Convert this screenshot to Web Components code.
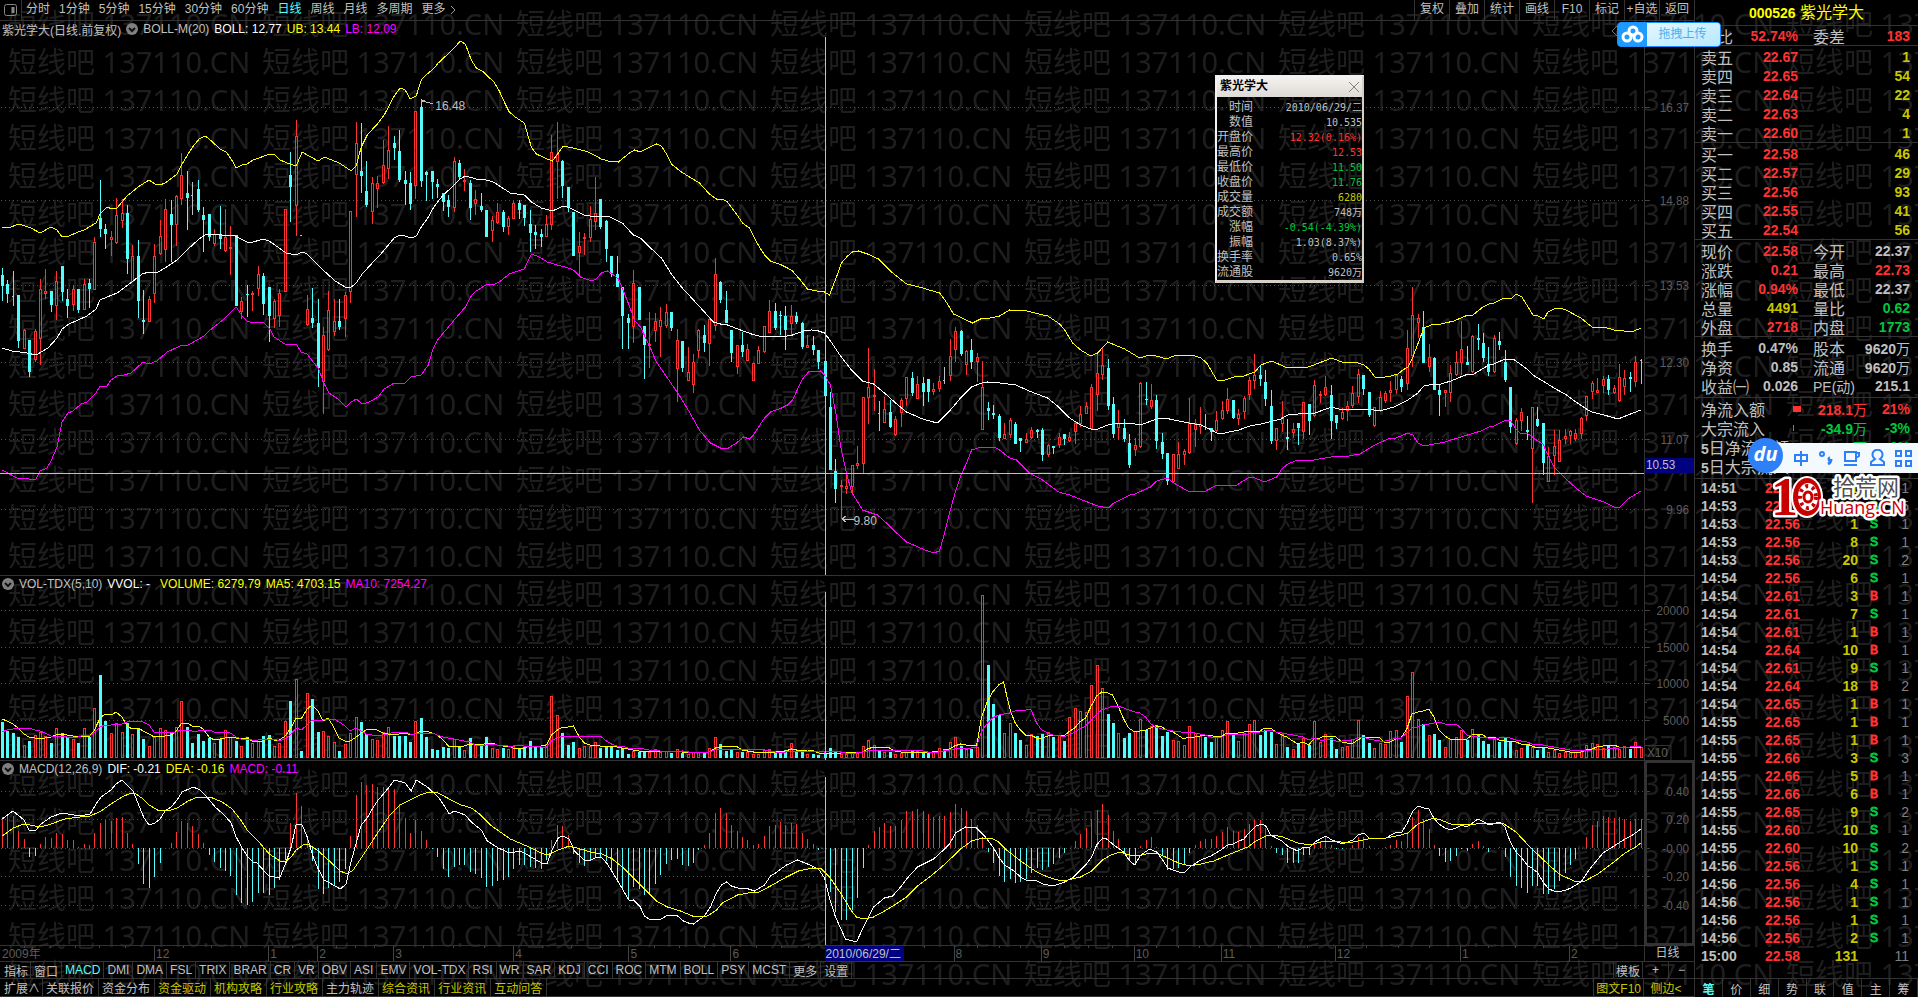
<!DOCTYPE html>
<html lang="zh-CN">
<head>
<meta charset="utf-8">
<title>紫光学大 000526</title>
<style>
  html, body { margin: 0; height: 100%; background: #000; overflow: hidden; }
  body { font-family: "Liberation Sans", "Noto Sans CJK SC", sans-serif; font-size: 12px; color: #c0c0c0; }
</style>
</head>
<body>
<stock-terminal></stock-terminal>

<script>
const COLORS = { r: '#ff3232', c: '#54fcfc', w: '#c0c0c0' }
const STEP = 5.4415
const barX = (i) => Math.floor(2.4 + STEP * i)
const words = (text) => text.trim().split(/\s+/)

// colour, then high / body top / body bottom / low
const CANDLES = words(`
c268,275,286,301 c280,284,294,303 w271,296,296,306 c295,295,341,348 r329,330,349,349 c340,340,372,377 r329,331,360,362 r279,289,339,365 r269,291,294,299 c291,291,305,312
r271,281,306,320 c266,266,292,301 c289,299,306,318 r285,289,305,311 c289,289,310,313 r279,284,310,310 c279,283,289,308 r237,242,290,290 c180,218,229,237 c224,229,234,249
r231,237,240,256 r198,215,243,244 r199,213,221,228 c205,213,259,274 r245,256,282,282 c240,256,301,318 c290,320,322,334 r296,299,322,322 r244,256,294,303 r220,236,254,255
r199,209,250,262 c200,214,225,262 r195,196,225,246 r153,175,199,205 c171,193,198,230 w182,195,195,215 c180,189,210,212 c207,215,220,252 c214,214,237,241 r229,234,244,246
c206,235,239,249 r209,237,251,252 r226,247,249,275 c235,235,306,306 r297,301,312,319 c285,294,295,317 r291,293,295,311 r266,274,289,296 c273,276,304,315 c287,287,316,342
r299,301,319,328 r289,293,316,327 r209,209,292,292 c152,175,187,222 r120,136,206,236 w235,235,235,236 r295,309,325,326 c288,318,323,328 c299,323,368,387 r327,335,382,414
r291,310,350,351 r299,321,332,336 c299,321,327,330 r292,295,319,337 r211,211,292,303 r122,143,175,217 c123,171,176,193 c161,191,205,207 r177,183,212,224 r176,183,189,208
r140,165,183,184 r126,150,169,179 c136,143,148,160 c130,151,180,182 c171,180,184,205 c172,183,204,210 r111,111,186,199 c99,107,181,187 c171,172,175,201 c171,171,182,199
c179,184,187,198 c193,193,202,211 c195,200,207,217 r157,161,208,212 c160,163,177,180 r169,180,182,191 c180,183,208,220 r190,199,204,215 c193,206,210,212 c210,210,237,237
r216,220,231,242 r203,212,223,224 c210,212,227,232 r216,218,227,235 r201,203,219,219 c200,203,210,219 c205,205,218,226 c210,224,233,252 c225,232,235,249 c229,234,237,247
r215,224,237,237 r135,152,225,230 r122,154,162,199 c160,161,186,198 c187,187,207,212 c212,212,256,256 r232,246,253,276 r233,237,239,255 r206,219,238,242 r177,213,222,230
c199,199,227,229 c220,221,249,262 c256,256,274,277 c256,274,287,287 c287,287,316,349 c314,318,323,349 r270,283,327,343 c287,287,320,320 c326,326,345,379 r312,344,346,368
r313,321,331,342 r307,320,327,357 r304,312,326,328 c312,312,328,331 r329,340,369,402 c341,341,368,372 r347,372,381,381 r354,362,385,393 r329,330,351,358 c325,335,343,352
r317,319,344,366 r258,274,326,331 c281,282,300,303 c291,310,323,323 c330,330,353,362 r345,345,367,374 c332,345,352,357 r344,349,361,361 r363,363,381,381 r346,350,364,364
r326,326,352,353 r300,311,333,333 c303,311,328,330 c311,315,316,335 c306,316,330,350 r305,316,324,336 c312,316,322,324 c322,323,347,349 r335,345,348,348 c336,345,350,355
c350,350,362,369 c361,361,396,396 c392,407,470,470 c459,471,489,503 r480,485,487,519 r475,486,489,494 r465,465,487,494 r446,463,466,469 r397,397,464,473 r348,387,398,424
r369,395,397,411 w401,413,413,431 r397,409,423,423 c400,412,427,428 r416,419,435,436 r398,400,413,427 r377,377,399,406 c372,378,393,396 r376,384,399,399 c377,383,392,406
c379,379,392,402 r383,389,392,395 r376,381,389,392 w367,380,380,384 r339,356,376,381 r327,331,350,362 c330,331,354,356 r350,351,365,375 c339,350,362,369 r353,357,362,382
r361,387,430,430 c402,408,411,420 c405,413,415,419 c414,416,438,441 r423,434,439,439 r418,420,435,438 c422,424,444,444 c438,438,441,452 r433,439,443,443 r427,430,438,439
c429,430,432,438 c428,430,455,461 r444,445,455,457 c446,446,448,454 r433,437,445,448 c434,434,439,445 r432,437,441,442 r421,423,432,444 r406,414,424,427 r402,406,414,414
r384,387,429,430 r353,373,395,411 r348,365,375,380 c359,368,406,410 c397,404,434,438 r410,423,428,440 c419,428,439,442 c434,443,465,468 r438,445,450,456 r382,383,447,448
c382,399,400,405 r384,400,407,409 c395,400,441,449 c433,442,454,459 c453,453,481,485 r454,454,482,482 r442,454,469,469 r449,451,455,465 r398,423,453,454 r419,423,430,447
r407,424,427,434 w414,426,426,430 c428,428,432,441 r411,420,431,432 r401,410,419,420 r388,399,411,414 c400,400,418,419 r409,414,419,425 r396,398,412,419 r377,380,395,400
r354,375,381,389 c365,375,379,386 c370,382,399,406 c390,406,441,444 r428,428,441,450 r401,417,424,432 c419,437,439,450 r423,429,433,438 c423,423,428,445 r402,402,432,439
c404,404,421,435 r380,385,416,417 r391,394,395,403 r376,387,395,396 c385,395,421,439 c415,415,423,429 r408,412,419,420 r401,406,411,421 r386,393,406,408 r369,374,397,403
c375,375,389,395 c392,392,415,417 r407,407,426,427 r391,397,411,412 r391,393,401,403 r381,390,393,402 r375,375,390,394 c376,379,387,392 r330,348,384,390 r287,315,356,367
r314,318,323,338 c311,327,363,363 r344,357,367,372 c357,358,390,390 c385,390,395,416 r390,390,393,407 r365,373,393,402 r351,362,375,376 r321,349,363,375 c346,362,365,365
r335,336,372,373 c324,338,340,350 c333,343,358,362 c347,364,372,376 r335,338,372,373 c332,341,345,350 c350,362,380,382 c387,387,427,433 r418,420,444,445 r408,412,421,431
c416,430,432,440 r407,407,449,503 c407,419,426,427 c423,423,463,475 r447,456,482,482 r430,446,456,475 r430,440,462,462 r429,436,439,444 r430,431,436,444 r429,433,439,441
r417,418,434,439 r396,396,416,421 r381,383,392,399 r378,390,393,393 r376,379,386,393 c375,379,390,395 r385,388,393,394 r364,377,401,402 r370,378,387,395 c372,377,379,392
r356,362,382,387 w359,360,360,384`).map((item) => ({ color: item[0], p: item.slice(1).split(',').map(Number) }))

const VOLUMES = words(`
36 27 25 21 13 17 23 26 22 15 30 25 21 19 15 30 21 50 83 37 25 35 26 35 24 30 19 12 21 30 28 26 31 57 31 15 24 17 20 15
19 28 21 17 12 21 15 17 22 23 12 15 37 57 79 7 65 59 26 27 22 16 7 14 25 41 36 24 19 18 26 31 22 22 22 16 37 40 21 9
8 11 10 19 12 8 20 13 12 21 10 9 10 9 12 10 11 17 12 11 14 62 43 25 13 16 10 12 12 16 10 11 12 8 10 4 7 6 6 6
9 6 7 5 9 5 4 6 6 6 10 21 14 7 8 6 6 6 4 4 8 9 6 6 8 15 6 6 4 4 3 4 10 6 4 4 5 5 12 18
13 7 6 6 4 5 6 7 7 6 6 6 10 9 16 21 12 9 9 11 163 93 54 43 25 35 25 18 13 24 22 24 26 21 23 17 41 50 47 46
73 93 70 44 35 25 20 25 27 39 28 32 33 22 26 18 17 13 32 25 22 21 16 22 28 37 23 17 25 34 38 23 28 26 14 24 11 9 14 20
13 37 16 24 20 9 11 12 19 38 23 15 10 15 14 27 28 16 62 86 39 34 23 24 18 11 19 21 28 18 29 24 17 14 19 16 20 17 8 10
13 11 8 11 6 8 5 6 6 6 7 13 15 14 10 13 11 9 12 9 16 11`).map(Number)

// histogram heights, below zero when negative
const MACD = words(`
31 34 32 17 9 -9 -8 4 11 10 15 14 8 8 1 4 3 15 25 28 27 30 31 15 4 -16 -36 -40 -29 -15 0 5 16 27 25 22 14 5 -7 -14
-20 -23 -28 -47 -55 -57 -54 -45 -45 -47 -40 -32 -12 25 55 42 11 -13 -41 -46 -40 -37 -34 -21 12 53 66 63 64 61 61 61 59 44 30 15 28 17 8 -1
-9 -21 -29 -19 -17 -17 -24 -26 -30 -39 -38 -33 -32 -29 -21 -17 -17 -19 -20 -21 -12 8 23 22 13 -6 -15 -18 -13 -10 -10 -13 -23 -32 -42 -52 -39 -41 -47 -46
-36 -27 -16 -12 -11 -17 -18 -15 -2 3 15 35 40 35 23 17 11 8 3 4 12 22 23 26 23 25 24 15 9 4 -2 -15 -44 -64 -72 -72 -62 -50 -20 3
17 21 25 22 22 28 37 37 39 37 34 31 32 32 36 44 40 37 29 23 11 -4 -15 -28 -34 -31 -35 -34 -31 -25 -20 -22 -19 -16 -10 -5 0 7 14 20
29 38 44 33 17 9 -4 -13 -16 2 8 11 1 -8 -22 -21 -20 -16 -5 3 7 9 9 12 16 21 17 16 19 24 28 28 20 2 -5 -7 -15 -15 -15 -7
-7 4 7 11 3 -1 -1 0 3 11 11 2 0 0 1 3 8 7 16 31 38 29 19 3 -8 -14 -13 -8 -1 -3 4 7 2 -4 0 1 -9 -29 -38 -40
-45 -38 -38 -46 -46 -41 -33 -25 -17 -11 0 11 23 27 32 31 30 31 29 27 29 29`).map(Number)

const UPPER = `2,227 8,228 19,224 31,228 40,233 51,227 57,230 62,237 69,236 78,232 84,230 96,223 100,214 107,207 112,209 117,208 127,196 138,187 149,180 155,184 160,185 165,183 177,174 182,164 188,154 194,145 199,139 205,136 209,139 220,149 226,152 231,159 236,168 242,165 247,164 253,160 267,155 274,154 280,160 287,163 296,166 302,152 307,155 318,161 324,157 339,163 351,171 356,166 361,147 367,135 378,123 384,115 394,96 400,88 405,90 410,99 416,96 421,80 427,74 433,69 438,63 454,48 460,41 465,44 471,60 476,68 482,71 488,77 493,81 499,91 504,102 509,112 515,117 524,123 531,147 536,154 547,159 552,161 558,153 563,146 573,148 588,152 601,159 608,161 618,162 629,153 634,150 640,152 656,144 661,146 666,154 671,164 681,172 699,183 709,194 716,199 722,199 727,202 736,214 742,223 749,228 756,242 764,255 770,261 781,265 787,268 792,271 799,279 807,289 816,291 824,292 829,295 836,277 841,263 847,256 852,252 858,251 867,254 878,259 891,272 906,284 922,288 939,293 945,301 953,314 972,323 982,318 989,318 999,316 1009,310 1026,311 1047,316 1059,324 1064,330 1072,343 1080,350 1090,356 1097,353 1107,342 1124,349 1139,358 1145,356 1152,355 1166,359 1173,356 1183,355 1194,356 1200,358 1206,363 1216,380 1222,381 1230,378 1237,376 1243,376 1254,372 1260,365 1271,361 1280,365 1284,367 1307,367 1313,365 1331,358 1341,362 1357,363 1363,365 1368,369 1374,377 1379,378 1390,376 1397,374 1402,370 1407,367 1412,357 1423,328 1433,324 1440,324 1453,321 1467,315 1472,315 1482,307 1488,304 1493,303 1499,300 1504,298 1510,299 1515,294 1521,297 1532,315 1537,316 1543,319 1547,312 1553,309 1559,308 1565,310 1580,318 1591,327 1603,327 1613,330 1623,331 1633,331 1640,328`
const MIDDLE = `2,348 12,351 27,353 36,355 48,348 57,338 62,329 69,324 87,316 96,309 100,300 107,297 117,293 133,281 142,274 149,272 156,273 165,268 177,260 188,249 199,239 205,235 210,234 222,235 235,236 247,242 253,242 263,239 269,241 286,253 296,255 302,252 307,254 318,265 324,271 335,281 345,287 351,287 356,283 362,274 372,263 378,257 389,244 394,238 400,235 405,236 411,238 416,236 421,227 427,219 433,208 438,201 444,194 454,185 460,179 465,176 476,179 482,179 493,182 510,193 524,195 531,202 541,208 552,211 563,206 570,208 584,215 590,216 608,216 614,219 622,223 633,235 640,238 648,246 661,258 671,274 681,287 693,300 704,312 713,322 720,324 727,325 740,330 751,334 758,336 781,337 792,335 803,331 811,330 818,331 824,333 830,341 840,356 851,370 862,381 873,384 884,393 895,403 906,412 922,419 933,422 938,422 949,411 960,398 966,392 971,387 981,383 987,382 999,383 1015,385 1031,392 1047,398 1058,407 1069,418 1080,425 1090,429 1097,429 1107,425 1116,423 1129,423 1139,425 1145,423 1156,419 1164,418 1183,422 1200,425 1211,430 1216,433 1224,433 1238,430 1249,426 1260,424 1280,419 1287,415 1297,414 1314,413 1331,407 1338,409 1368,409 1379,411 1393,407 1407,400 1417,393 1423,386 1433,384 1440,384 1450,381 1467,374 1473,374 1488,365 1493,364 1504,359 1512,359 1515,361 1526,369 1532,375 1542,381 1553,388 1564,394 1575,402 1587,410 1591,412 1603,415 1617,419 1627,415 1640,410`
const LOWER = `2,470 19,479 24,478 29,479 36,479 40,471 47,468 51,461 57,447 62,422 68,413 73,411 81,404 87,402 96,393 100,386 107,386 111,380 117,376 124,375 131,373 143,362 149,364 157,361 167,352 180,346 188,345 204,336 210,330 224,319 236,307 242,316 247,321 253,323 263,322 269,328 274,337 286,345 296,344 301,352 307,354 313,362 318,368 324,384 329,393 339,400 346,407 351,402 356,399 362,404 369,402 378,397 384,389 394,383 405,383 411,377 421,375 428,365 433,348 438,339 444,332 454,320 465,307 471,296 476,291 487,284 493,285 499,282 509,274 524,269 531,254 539,257 547,262 557,265 565,267 573,270 580,277 591,281 596,279 601,273 607,271 612,274 618,279 623,291 629,306 634,320 640,327 650,348 656,362 678,394 689,412 699,430 710,443 720,448 728,448 736,443 743,437 749,439 753,435 764,418 770,412 781,408 787,405 792,400 802,379 808,372 820,371 824,375 830,385 836,417 840,446 846,473 851,492 862,510 877,515 887,524 895,532 906,542 922,549 933,553 939,551 944,533 949,513 955,491 960,476 966,463 971,450 981,447 993,447 999,450 1009,458 1016,460 1030,474 1042,480 1058,492 1069,495 1097,506 1108,508 1113,503 1129,495 1134,494 1150,487 1156,481 1167,478 1173,483 1187,491 1205,491 1216,485 1236,485 1249,477 1254,478 1264,482 1276,477 1281,469 1287,464 1297,460 1313,460 1330,457 1348,456 1359,454 1374,445 1387,439 1395,438 1407,433 1412,435 1417,443 1423,446 1444,442 1460,437 1480,431 1488,427 1493,426 1505,420 1510,421 1515,429 1520,434 1526,433 1537,441 1542,444 1548,457 1553,467 1564,478 1575,488 1585,496 1603,502 1613,507 1619,507 1627,499 1640,491`
const DIF = `2,819 13,811 24,820 29,830 36,830 41,824 51,817 62,813 80,816 90,814 96,804 101,797 111,790 116,784 122,780 133,791 139,806 144,818 149,825 155,823 160,819 165,811 171,807 177,800 182,792 193,787 200,790 205,795 215,807 225,816 231,823 236,837 242,848 247,856 253,862 257,863 263,870 269,876 275,877 280,877 286,862 291,847 296,824 302,825 307,837 313,857 318,869 324,880 335,886 340,889 346,884 350,865 356,843 361,825 367,818 372,809 378,800 389,787 394,780 405,783 411,791 416,780 427,787 438,797 444,806 449,814 454,811 465,815 471,822 481,830 487,841 498,848 509,853 520,851 531,857 541,863 547,863 552,849 558,838 562,836 569,839 574,851 584,860 591,860 596,857 602,858 607,864 612,872 618,882 629,901 633,900 640,907 644,916 650,920 661,919 667,915 676,915 683,921 688,923 693,924 704,916 710,907 716,893 721,885 726,882 731,886 737,888 748,889 754,891 764,885 770,876 775,873 786,865 797,860 807,864 818,869 824,878 829,898 835,917 845,939 856,942 862,929 868,917 873,907 884,898 892,896 900,887 906,879 917,867 933,859 944,849 949,844 955,833 965,827 976,828 984,836 987,840 993,848 998,857 1004,865 1012,870 1020,877 1025,880 1036,881 1042,884 1053,886 1064,882 1073,877 1085,865 1091,857 1096,845 1102,838 1106,839 1113,845 1123,852 1129,861 1134,865 1140,855 1149,849 1156,852 1162,860 1167,868 1178,872 1184,872 1189,867 1200,860 1210,856 1220,850 1227,845 1232,844 1243,839 1250,831 1255,826 1261,824 1265,826 1270,835 1281,841 1288,847 1297,851 1303,847 1308,848 1314,842 1325,836 1331,840 1342,844 1347,842 1352,840 1357,835 1363,833 1368,838 1385,838 1396,832 1401,832 1406,824 1412,811 1417,806 1423,808 1428,809 1433,818 1438,824 1444,828 1450,830 1455,828 1461,825 1466,827 1477,819 1483,822 1488,825 1499,822 1504,827 1509,841 1515,852 1521,858 1527,866 1531,868 1537,873 1542,882 1548,889 1553,891 1558,892 1565,890 1570,888 1580,882 1586,873 1592,865 1602,853 1613,846 1624,839 1630,836 1640,829`
const DEA = `2,836 8,832 13,828 24,824 41,827 51,824 65,819 80,817 90,816 101,811 111,804 122,797 131,793 136,794 143,799 149,805 159,811 171,810 177,808 188,801 195,798 210,797 222,802 232,809 242,822 247,830 258,841 269,854 280,861 286,861 291,857 296,850 303,845 308,844 318,851 327,859 340,871 347,874 353,870 361,858 369,846 378,832 389,816 400,805 412,799 420,795 429,792 438,793 449,799 461,805 471,808 478,813 490,825 510,839 531,848 541,853 547,855 558,850 569,846 580,849 590,852 602,854 612,859 623,868 640,885 650,895 656,901 667,907 680,911 692,916 700,917 707,916 716,910 722,903 737,895 748,893 759,892 770,886 786,877 798,871 812,868 821,869 829,877 840,893 851,911 856,917 863,919 873,917 884,911 894,905 906,897 917,886 929,877 941,867 955,854 960,849 971,841 982,838 992,839 998,842 1006,850 1020,861 1036,872 1047,877 1057,880 1067,880 1080,877 1091,871 1102,860 1110,855 1119,852 1129,855 1137,856 1149,853 1156,853 1167,858 1178,863 1189,866 1200,864 1213,861 1232,853 1247,847 1255,841 1265,836 1272,835 1282,837 1297,843 1310,845 1320,842 1333,841 1347,843 1367,839 1385,838 1400,835 1407,833 1417,824 1427,820 1433,818 1440,820 1450,824 1467,825 1483,823 1502,823 1506,826 1515,832 1531,849 1548,865 1558,874 1573,881 1582,882 1597,874 1613,862 1624,853 1633,848 1640,843`

const polyline = (points, color) => `<polyline points="${points}" fill="none" stroke="${color}"/>`
const gridLines = (levels) => levels.map((y) => `<path d="M1 ${y}.5H1643" stroke="#505050" stroke-dasharray="1 3"/>`).join('')
const crosshair = (from, to) => `<path d="M824.5 ${from}V${to}" stroke="#c0c0c0"/>`

function drawCandles() {
  const d = { r: '', c: '', w: '' }
  let bodies = ''
  CANDLES.forEach(({ color, p: [high, top, bottom, low] }, i) => {
    const x = barX(i)
    if (color === 'r') {
      d.r += `M${x} ${high}h1V${top}h-1zM${x} ${bottom}h1V${low}h-1z`
      bodies += `M${x - 1} ${top}h3V${Math.max(bottom, top + 2)}h-3zM${x} ${top + 1}v${Math.max(bottom - top - 2, 0)}h1V${top + 1}z`
    } else {
      d[color] += `M${x} ${high}h1V${low}h-1z`
      d[color] += color === 'c' ? `M${x - 1} ${top}h3V${Math.max(bottom, top + 1)}h-3z` : `M${x - 1} ${top}h2v1h-2z`
    }
  })
  return `<path d="${d.r}" fill="${COLORS.r}"/><path d="${bodies}" fill="${COLORS.r}" fill-rule="evenodd"/>
    <path d="${d.c}" fill="${COLORS.c}"/><path d="${d.w}" fill="${COLORS.w}"/>`
}

function average(size) {
  const before = [10, 12, 14, 14, 20, 38, 38, 40, 42]
  const all = [...before, ...VOLUMES]
  return VOLUMES.map((_, i) => {
    const part = all.slice(i + before.length - size + 1, i + before.length + 1)
    const mean = part.reduce((sum, v) => sum + v, 0) / size
    return `${barX(i)},${Math.round(758 - mean)}`
  }).join(' ')
}

function drawVolume() {
  let red = ''
  let cyan = ''
  VOLUMES.forEach((v, i) => {
    const x = barX(i)
    const top = 758 - v
    if (CANDLES[i].color === 'r' || i === 301) red += `M${x - 1} ${top}h3V758h-3zM${x} ${top + 1}V757h1V${top + 1}z`
    else cyan += `M${x - 1} ${top}h3V758h-3z`
  })
  return `<path d="${red}" fill="${COLORS.r}" fill-rule="evenodd"/><path d="${cyan}" fill="${COLORS.c}"/>`
    + polyline(average(5), '#ff0') + polyline(average(10), '#f0f')
}

function drawMacd() {
  const d = { r: '', c: '' }
  MACD.forEach((v, i) => { if (v) d[v > 0 ? 'r' : 'c'] += `M${barX(i)}.5 848V${848 - v}` })
  return `<path d="${d.r}" stroke="${COLORS.r}"/><path d="${d.c}" stroke="${COLORS.c}"/>` + polyline(DIF, '#fff') + polyline(DEA, '#ff0')
}

const PANELS = {
  price: {
    top: 21, height: 554,
    draw: () => gridLines([107, 200, 285, 362, 439, 509]) + drawCandles()
      + polyline(UPPER, '#ff0') + polyline(MIDDLE, '#fff') + polyline(LOWER, '#f0f')
      + crosshair(37, 575) + `<path d="M0 473.5H1643" stroke="#c0c0c0"/>
        <path d="M433 104L422 101M421 105V100H425M853 519.5H842M845 516L842 519L845 522" fill="none" stroke="#c0c0c0"/>
        <text x="435" y="110" fill="#c0c0c0">16.48</text><text x="853" y="525" fill="#c0c0c0">9.80</text>`,
    ticks: [[107, '16.37'], [200, '14.88'], [285, '13.53'], [362, '12.30'], [439, '11.07'], [509, '9.96']],
    extra: '<rect x="0" y="458" width="51" height="15" fill="#000080"/><text x="1" y="469" style="text-anchor:start;fill:#c0c0c0">10.53</text>'
  },
  volume: {
    top: 576, height: 184,
    draw: () => gridLines([610, 647, 683, 720]) + drawVolume() + crosshair(591, 760),
    ticks: [[610, '20000'], [647, '15000'], [683, '10000'], [720, '5000']],
    minor: [629, 665, 702, 739],
    extra: '<path d="M0 745.5H26.5V760" fill="none" stroke="#333"/><text x="2" y="757" style="text-anchor:start">X10</text>'
  },
  macd: {
    top: 761, height: 184,
    draw: () => gridLines([791, 819, 848, 876, 905]) + drawMacd() + crosshair(776, 945),
    ticks: [[791, '0.40'], [819, '0.20'], [848, '-0.00'], [876, '-0.20'], [905, '-0.40']],
    minor: [805, 833, 862, 891],
    extra: '<rect x="1" y="762" width="48" height="182" fill="none" stroke="#333" stroke-width="2"/>'
  }
}

class ChartPanel extends HTMLElement {
  constructor() {
    super()
    this.attachShadow({ mode: 'open' })
  }
  connectedCallback() {
    const { top, height, draw, ticks, minor = [], extra } = PANELS[this.getAttribute('kind')]
    this.shadowRoot.innerHTML = /*html*/ `
      <style>
        :host { display: grid; grid-template-columns: minmax(0, 1fr) 50px; min-height: 0; box-sizing: border-box; }
        .plot { display: flex; flex-direction: column; min-height: 0; }
        header { display: flex; align-items: center; gap: 5px; height: 16px; padding: 0 2px; white-space: nowrap; }
        .plot svg.chart { flex: 1; min-height: 0; width: 100%; }
        .scale { position: relative; border-left: 1px solid #333; min-height: 0; }
        .scale svg { display: block; width: 100%; height: 100%; }
        svg { shape-rendering: crispEdges; font-size: 12px; }
        .scale text { text-anchor: end; fill: #5c5c5c; }
      </style>
      <section class="plot">
        <header><slot></slot></header>
        <svg class="chart" viewBox="0 ${top + 16} 1643 ${height - 16}" preserveAspectRatio="none">${draw()}</svg>
      </section>
      <div class="scale">
        <svg viewBox="0 ${top} 50 ${height}" preserveAspectRatio="none">
          ${ticks.map(([y, label]) => `<path d="M0 ${y}.5H5" stroke="#444"/><text x="45" y="${y + 5}">${label}</text>`).join('')}
          ${minor.map((y) => `<path d="M0 ${y}.5H2" stroke="#444"/>`).join('')}
          ${extra}
        </svg>
      </div>`
  }
}
customElements.define('chart-panel', ChartPanel)

class FoldButton extends HTMLElement {
  connectedCallback() {
    this.attachShadow({ mode: 'open' }).innerHTML = /*html*/ `
      <style>
        :host { display: flex; }
        button { display: flex; padding: 0; border: 0; background: none; }
      </style>
      <button aria-label="折叠"><svg width="12" height="12"><circle cx="6" cy="6" r="6" fill="#808080"/><path d="M3 5l3 3 3-3" fill="none" stroke="#111" stroke-width="2"/></svg></button>`
  }
}
customElements.define('fold-button', FoldButton)

class TopBar extends HTMLElement {
  connectedCallback() {
    const periods = ['分时', '1分钟', '5分钟', '15分钟', '30分钟', '60分钟', '日线', '周线', '月线', '多周期', '更多']
    const tools = ['复权', '叠加', '统计', '画线', 'F10', '标记', '+自选', '返回']
    this.attachShadow({ mode: 'open' }).innerHTML = /*html*/ `
      <style>
        :host { display: flex; justify-content: space-between; height: 20px; border-bottom: 1px solid #333; }
        button { font: inherit; color: inherit; background: none; border: 0; padding: 0; line-height: 18px; white-space: nowrap; }
        nav, .tools { display: flex; align-items: flex-start; }
        .dock { display: flex; align-items: center; justify-content: center; width: 22px; height: 20px; border-right: 1px solid #333; margin-right: 4px; }
        nav { gap: 9px; }
        nav svg { margin: 5px 0 0 -5px; }
        .periods { display: flex; }
        .on { color: #54fcfc; }
        .tools button { width: 35px; height: 20px; padding-bottom: 2px; border-left: 1px solid #333; }
      </style>
      <div class="periods">
        <button class="dock" aria-label="侧栏"><svg width="13" height="13" fill="none" stroke="#888"><rect x=".5" y=".5" width="12" height="11" rx="2"/><path d="M9 3v6" stroke-width="3"/></svg></button>
        <nav>${periods.map((name) => `<button class="${name === '日线' ? 'on' : ''}">${name}</button>`).join('')}
          <svg width="6" height="10" fill="none" stroke="#a0a0a0"><path d="M1 1l4 4-4 4"/></svg></nav>
      </div>
      <div class="tools">${tools.map((name) => `<button>${name}</button>`).join('')}</div>`
  }
}
customElements.define('top-bar', TopBar)

class DateAxis extends HTMLElement {
  connectedCallback() {
    const months = [[154, 12], [268, 1], [317, 2], [393, 3], [513, 4], [628, 5], [730, 6], [953, 8], [1040, 9], [1133, 10], [1220, 11], [1334, 12], [1459, 1], [1568, 2]]
    const minor = [24, 50, 75, 99, 125, 183, 211, 240, 292, 336, 355, 374, 423, 453, 484, 542, 571, 600, 654, 679, 704, 756, 781, 808, 923, 976, 998, 1019, 1063, 1087, 1111, 1155, 1177, 1198, 1249, 1277, 1306, 1365, 1397, 1428, 1487, 1514, 1542]
    this.attachShadow({ mode: 'open' }).innerHTML = /*html*/ `
      <style>
        :host { display: grid; grid-template-columns: minmax(0, 1fr) 50px; height: 15px; border-top: 1px solid #333; }
        svg { width: 100%; height: 15px; font-size: 12px; fill: #5c5c5c; shape-rendering: crispEdges; }
        span { border-left: 1px solid #333; text-align: center; line-height: 15px; padding-right: 4px; }
      </style>
      <svg viewBox="0 0 1643 15" preserveAspectRatio="none">
        <text x="2" y="12">2009年</text>
        ${months.map(([x, m]) => `<path d="M${x}.5 0V15" stroke="#444"/><text x="${x + 2}" y="12">${m}</text>`).join('')}
        ${minor.map((x) => `<path d="M${x}.5 0v2" stroke="#444"/>`).join('')}
        <rect x="824" width="79" height="15" fill="#000080"/><text x="825" y="12" fill="#c0c0c0">2010/06/29/二</text>
      </svg>
      <span>日线</span>`
  }
}
customElements.define('date-axis', DateAxis)

class TabStrip extends HTMLElement {
  connectedCallback() {
    const items = this.getAttribute('items').split(' ')
    const hot = (this.getAttribute('hot') || '').split(' ')
    const paint = (name) => name === this.getAttribute('active') ? 'on' : hot.includes(name) ? 'hot' : ''
    this.attachShadow({ mode: 'open' }).innerHTML = /*html*/ `
      <style>
        :host { display: flex; align-items: stretch; border-top: 1px solid #333; height: var(--strip-height, 16px); }
        nav { display: flex; flex: 1; }
        button { font: inherit; color: inherit; background: none; border: 0; border-right: 1px solid #333; padding: 0 var(--tab-end, 3px) 0 3px; white-space: nowrap; }
        nav button:first-child { padding: 0 2px 0 4px; }
        .on { color: #54fcfc; }
        .hot { color: #c8c800; }
      </style>
      <nav>${items.map((name) => `<button class="${paint(name)}">${name}</button>`).join('')}</nav>
      <slot></slot>`
  }
}
customElements.define('tab-strip', TabStrip)

class QuotePanel extends HTMLElement {
  connectedCallback() {
    const groups = [
      [['委比', '52.74%', 'r', '委差', '183', 'r']],
      ['五 22.67 1', '四 22.65 54', '三 22.64 22', '二 22.63 4', '一 22.60 1'].map((s) => this.order('卖', s)),
      ['一 22.58 46', '二 22.57 29', '三 22.56 93', '四 22.55 41', '五 22.54 56'].map((s) => this.order('买', s)),
      [['现价', '22.58', 'r', '今开', '22.37', 'w'], ['涨跌', '0.21', 'r', '最高', '22.73', 'r'], ['涨幅', '0.94%', 'r', '最低', '22.37', 'w'],
        ['总量', '4491', 'y', '量比', '0.62', 'g'], ['外盘', '2718', 'r', '内盘', '1773', 'g']],
      [['换手', '0.47%', 'w', '股本', '9620<i>万</i>', 'w'], ['净资', '0.85', 'w', '流通', '9620<i>万</i>', 'w'], ['收益㈠', '0.026', 'w', '<small>PE(动)</small>', '215.1', 'w']]
    ]
    const flows = [['净流入额', 'block', '218.1', '21%', 'r'], ['大宗流入', 'line', '-34.9', '-3%', 'g'],
      ['<b>5</b>日净流入额', '', '-227.5', '-6%', 'g'], ['<b>5</b>日大宗流入', '', '-64.1', '-2%', 'g']]
    this.attachShadow({ mode: 'open' }).innerHTML = /*html*/ `
      <style>
        :host { display: block; }
        h1 { margin: 0; height: 25px; line-height: 25px; border-bottom: 1px solid #333; text-align: center; color: #ff0; font-size: 16px; font-weight: normal; }
        h1 b { font-size: 14px; }
        .group { padding: 1px 8px 0 6px; border-bottom: 1px solid #333; }
        .group:nth-of-type(5) { padding-bottom: 2px; }
        .group:first-of-type { padding-top: 0; }
        .group.flow { padding-bottom: 3px; }
        .row { display: grid; grid-template-columns: 1fr 1fr; column-gap: 15px; }
        .row div, .flow div { display: flex; justify-content: space-between; align-items: center; height: 19px; }
        .name { font-size: 16px; white-space: nowrap; }
        b { font-size: 14px; }
        i { font-style: normal; font-weight: normal; font-size: 14px; }
        small { font-size: 14px; }
        .r { color: #ff3232 } .g { color: #00c83c } .y { color: #c8c800 } .w { color: #c0c0c0 }
        .flow .name { width: 92px; }
        .block { width: 8px; height: 6px; background: #ff3232; }
        .line { width: 1px; height: 6px; margin-right: 7px; background: #00c83c; }
        .flow .money { flex: 1; text-align: right; }
        .flow .share { width: 43px; text-align: right; }
      </style>
      <h1><b>000526</b> 紫光学大</h1>
      ${groups.map((rows) => `<section class="group">${rows.map(([n1, v1, c1, n2, v2, c2]) => `
        <div class="row"><div><span class="name">${n1}</span><b class="${c1}">${v1}</b></div>
        <div><span class="name">${n2}</span><b class="${c2}">${v2}</b></div></div>`).join('')}</section>`).join('')}
      <section class="group flow">${flows.map(([name, mark, money, share, color]) => `
        <div><span class="name">${name}</span><span class="${mark}"></span>
        <b class="money ${color}">${money}<i>万</i></b><b class="share ${color}">${share}</b></div>`).join('')}</section>`
  }
  order(side, text) {
    const [level, price, lots] = text.split(' ')
    return [side + level, price, 'r', '', lots, 'y']
  }
}
customElements.define('quote-panel', QuotePanel)

class TickList extends HTMLElement {
  connectedCallback() {
    const ticks = words(`14:51,22.56,1,S,1 14:53,22.56,11,S,5 14:53,22.56,1,S,1 14:53,22.56,8,S,1 14:53,22.56,20,S,2
      14:54,22.56,6,S,1 14:54,22.61,3,B,1 14:54,22.61,7,S,1 14:54,22.61,1,B,1 14:54,22.64,10,B,1 14:54,22.61,9,S,1 14:54,22.64,18,B,2 14:54,22.65,1,B,1
      14:55,22.65,1,B,1 14:55,22.65,1,B,1 14:55,22.66,3,S,3 14:55,22.66,5,B,1 14:55,22.66,6,B,1 14:55,22.65,9,S,2 14:55,22.60,10,S,1 14:55,22.60,10,S,2
      14:56,22.56,1,S,1 14:56,22.56,4,S,1 14:56,22.56,1,S,1 14:56,22.56,1,S,1 14:56,22.56,2,S,1 15:00,22.58,131,,11`).map((row) => row.split(','))
    this.attachShadow({ mode: 'open' }).innerHTML = /*html*/ `
      <style>
        :host { display: block; padding: 0 9px 0 6px; }
        table { width: 100%; border-collapse: collapse; table-layout: fixed; font-size: 14px; font-weight: bold; }
        td { padding: 0; height: 18px; line-height: 18px; text-align: right; }
        td:nth-child(1) { width: 45px; text-align: left; }
        td:nth-child(2) { width: 54px; color: #ff3232; }
        td:nth-child(3) { width: 58px; color: #c8c800; }
        td:nth-child(4) { width: 32px; text-align: center; font-weight: normal; -webkit-text-stroke: 1px; font-size: 12px; }
        td:nth-child(5) { color: #808080; font-weight: normal; }
        .S { color: #00c83c } .B { color: #ff3232 }
      </style>
      <table>${ticks.map(([time, price, lots, side, count]) => `<tr><td>${time}</td><td>${price}</td><td>${lots}</td><td class="${side}">${side}</td><td>${count}</td></tr>`).join('')}</table>`
  }
}
customElements.define('tick-list', TickList)

class DataCard extends HTMLElement {
  connectedCallback() {
    const rows = [['时间', '2010/06/29/二', ''], ['数值', '10.535', ''], ['开盘价', '12.32(0.16%)', 'r'], ['最高价', '12.53', 'r'], ['最低价', '11.50', 'g'], ['收盘价', '11.76', 'g'],
      ['成交量', '6280', 'y'], ['成交额', '748万', ''], ['涨幅', '-0.54(-4.39%)', 'g'], ['振幅', '1.03(8.37%)', ''], ['换手率', '0.65%', ''], ['流通股', '9620万', '']]
    this.attachShadow({ mode: 'open' }).innerHTML = /*html*/ `
      <style>
        :host { display: block; width: 149px; box-sizing: border-box; border: 2px solid #f4f2f0; border-right-color: #d4d0c8; border-bottom: 3px solid #d4d0c8; }
        header { display: flex; justify-content: space-between; align-items: center; height: 20px; line-height: 18px; padding: 0 2px 0 3px; box-sizing: border-box; color: #000; font-weight: bold; background: linear-gradient(#f4f2f0, #dedad5); }
        header span { height: 20px; }
        button { display: flex; padding: 0; border: 0; background: none; }
        table { width: 100%; border-collapse: collapse; margin: 3px 0 0; }
        th { width: 36px; font-weight: normal; text-align: right; }
        th, td { height: 15px; line-height: 15px; padding: 0; white-space: nowrap; }
        td { text-align: right; font-family: "DejaVu Sans Mono", "Noto Sans CJK SC", monospace; font-size: 10px; }
        .r { color: #ff3232 } .g { color: #00c83c } .y { color: #c8c800 }
      </style>
      <header><span>紫光学大</span><button aria-label="关闭"><svg width="12" height="12" stroke="#808080"><path d="M1 1l10 10M11 1L1 11"/></svg></button></header>
      <table>${rows.map(([name, value, color]) => `<tr><th>${name}</th><td class="${color}">${value}</td></tr>`).join('')}</table>`
  }
}
customElements.define('data-card', DataCard)

class UploadPill extends HTMLElement {
  connectedCallback() {
    this.attachShadow({ mode: 'open' }).innerHTML = /*html*/ `
      <style>
        :host { display: flex; align-items: flex-start; }
        .fold { width: 6px; height: 14px; margin: 2px 0 0; }
        button { display: flex; align-items: center; width: 104px; height: 25px; padding: 0; border: 1px solid #1a90ff; border-radius: 4px; background: #1e9bff; overflow: hidden; font: inherit; color: #44b0f4; }
        .cloud { width: 29px; height: 23px; flex: none; }
        span { flex: 1; align-self: stretch; line-height: 23px; padding-right: 2px; background: linear-gradient(160deg, #e4f7ff, #b8e8fc); text-align: center; }
      </style>
      <svg class="fold" fill="none" stroke="#707070"><path d="M7 1L1 7l6 6"/></svg>
      <button><svg class="cloud" fill="none" stroke="#fff" stroke-width="3"><circle cx="15" cy="8" r="4"/><circle cx="9" cy="14" r="4"/><circle cx="20" cy="14" r="4"/></svg><span>拖拽上传</span></button>`
  }
}
customElements.define('upload-pill', UploadPill)

class InputBar extends HTMLElement {
  connectedCallback() {
    this.attachShadow({ mode: 'open' }).innerHTML = /*html*/ `
      <style>
        :host { display: flex; align-items: center; width: 170px; height: 35px; }
        .logo { z-index: 1; display: grid; place-items: center; width: 35px; height: 35px; flex: none; border-radius: 50%; background: #2e80f8; color: #fff; font-family: "Open Sans", "Noto Sans", sans-serif; font-size: 20px; font-weight: bold; font-style: italic; line-height: 1; padding-bottom: 3px; box-sizing: border-box; }
        .bar { flex: 1; display: flex; align-items: center; justify-content: space-between; height: 30px; margin: 5px 0 0 -17px; padding: 0 6px 0 27px; background: #f4f9fe; color: #2e80f8; }
        button { display: flex; padding: 0; border: 0; background: none; color: inherit; }
      </style>
      <span class="logo">du</span>
      <div class="bar">
        <svg width="16" height="17" fill="none" stroke="currentColor" stroke-width="2" role="img" aria-label="中文"><path d="M2 5H14V11H2zM8 1V16"/></svg>
        <button aria-label="标点"><svg width="16" height="16" fill="none" stroke="currentColor" stroke-width="2"><circle cx="4" cy="4" r="2"/><path d="M12 8a1 1 0 1 0 1 1c0 3-1 4-3 5" stroke-width="3"/></svg></button>
        <button aria-label="皮肤"><svg width="17" height="16" fill="none" stroke="currentColor" stroke-width="2"><path d="M2 2H13V11H2zM13 3h3v3l-3 2M1 15H14"/></svg></button>
        <button aria-label="用户"><svg width="17" height="18" fill="none" stroke="currentColor" stroke-width="2"><path d="M6 10a5 5 0 1 1 5 0l4 3v3H2v-3z"/></svg></button>
        <button aria-label="工具"><svg width="17" height="17" fill="none" stroke="currentColor" stroke-width="2"><path d="M1 1h5v5H1zM11 1h5v5h-5zM1 11h5v5H1zM11 11h5v5h-5z"/></svg></button>
      </div>`
  }
}
customElements.define('input-bar', InputBar)

class SiteBadge extends HTMLElement {
  connectedCallback() {
    this.attachShadow({ mode: 'open' }).innerHTML = /*html*/ `
      <style>
        :host { display: block; }
        svg { display: block; }
        text { paint-order: stroke; stroke: #fff; stroke-width: 5px; stroke-linejoin: round; }
      </style>
      <svg width="138" height="64" viewBox="-4 -10 138 64">
        <text x="-4" y="40" fill="#c80000" font-family="Liberation Serif" font-weight="bold" font-size="54">1</text>
        <ellipse cx="32" cy="22" rx="16" ry="21" fill="#fff"/>
        <ellipse cx="32" cy="22" rx="14" ry="19" fill="#c80000"/>
        <ellipse cx="33" cy="22" rx="10" ry="14" fill="#fff"/>
        <g fill="none" stroke="#c80000"><ellipse cx="33" cy="22" rx="4" ry="5" stroke-width="3"/>
        <ellipse cx="33" cy="22" rx="8" ry="11" stroke-width="4" stroke-dasharray="3 4"/></g>
        <text x="58" y="20" fill="#505050" font-family="Noto Sans CJK SC" font-size="22">拾荒网</text>
        <text x="45" y="39" fill="#c80000" font-family="Open Sans, Noto Sans" font-size="18">Huang.CN</text>
      </svg>`
  }
}
customElements.define('site-badge', SiteBadge)

class StockTerminal extends HTMLElement {
  constructor() {
    super()
    this.attachShadow({ mode: 'open' })
  }
  connectedCallback() {
    this.shadowRoot.innerHTML = /*html*/ `
      <style>
        :host { display: grid; grid-template-columns: minmax(0, 1fr) 223px; position: relative; isolation: isolate; height: 100vh; }
        .mark { position: absolute; inset: 0; width: 100%; height: 100%; z-index: -1; }
        main { display: flex; flex-direction: column; min-width: 0; min-height: 0; border-right: 1px solid #333; }
        .charts { flex: 1; display: grid; grid-template-rows: 555fr 185fr 184fr; min-height: 0; }
        .charts chart-panel { min-height: 0; }
        .charts chart-panel:not(:last-child) { border-bottom: 1px solid #333; }
        aside { display: flex; flex-direction: column; min-height: 0; }
        tick-list { flex: 1; }
        .white { color: #fff } .yellow { color: #ff0 } .pink { color: #f0f }
        .side { display: flex; }
        .side button { font: inherit; color: inherit; background: none; border: 0; border-left: 1px solid #333; padding: 0 2px; width: 26px; }
        .side .wide { width: 51px; padding: 0 6px 0 0; }
        .side .text { width: auto; }
        .side .hot { color: #c8c800; }
        .last { --strip-height: 17px; --tab-end: 4px; border-bottom: 1px solid #333; }
        .picks { display: grid; grid-template-columns: repeat(8, 1fr); height: 18px; border-top: 1px solid #333; }
        .picks button { font: inherit; color: inherit; background: none; border: 0; border-right: 1px solid #333; padding: 0; }
        .picks .on { color: #54fcfc; font-weight: bold; }
        data-card { position: absolute; top: 75px; right: 554px; }
        upload-pill { position: absolute; top: 22px; right: 197px; }
        site-badge { position: absolute; top: 465px; right: 9px; }
        input-bar { position: absolute; top: 438px; right: 0; }
      </style>
      <svg class="mark" aria-hidden="true">
        <pattern id="mark" width="254" height="38" patternUnits="userSpaceOnUse">
          <text x="8" y="35" fill="#1e1e1e" font-family="Noto Sans, Noto Sans CJK SC" font-size="29">短线吧 137110.CN</text>
        </pattern>
        <rect width="100%" height="100%" fill="url(#mark)"/>
      </svg>
      <main>
        <top-bar></top-bar>
        <div class="charts">
          <chart-panel kind="price"><span>紫光学大(日线.前复权)</span><fold-button></fold-button><span>BOLL-M(20)</span>
            <span class="white">BOLL: 12.77</span><span class="yellow">UB: 13.44</span><span class="pink">LB: 12.09</span></chart-panel>
          <chart-panel kind="volume"><fold-button></fold-button><span>VOL-TDX(5,10)</span><span class="white">VVOL: -</span>
            <span></span><span class="yellow">VOLUME: 6279.79</span><span class="yellow">MA5: 4703.15</span><span class="pink">MA10: 7254.27</span></chart-panel>
          <chart-panel kind="macd"><fold-button></fold-button><span>MACD(12,26,9)</span><span class="white">DIF: -0.21</span>
            <span class="yellow">DEA: -0.16</span><span class="pink">MACD: -0.11</span></chart-panel>
        </div>
        <date-axis></date-axis>
        <tab-strip active="MACD" items="指标 窗口 MACD DMI DMA FSL TRIX BRAR CR VR OBV ASI EMV VOL-TDX RSI WR SAR KDJ CCI ROC MTM BOLL PSY MCST 更多 设置">
          <div class="side"><button class="text">模板</button><button>+</button><button>−</button></div>
        </tab-strip>
        <tab-strip class="last" items="扩展∧ 关联报价 资金分布 资金驱动 机构攻略 行业攻略 主力轨迹 综合资讯 行业资讯 互动问答" hot="资金驱动 机构攻略 行业攻略 综合资讯 行业资讯 互动问答">
          <div class="side"><button class="text hot">图文F10</button><button class="wide hot">侧边&lt;</button></div>
        </tab-strip>
      </main>
      <aside>
        <quote-panel></quote-panel>
        <tick-list></tick-list>
        <div class="picks">${[...'笔价细势联值主筹'].map((name, i) => `<button class="${i ? '' : 'on'}">${name}</button>`).join('')}</div>
      </aside>
      <data-card></data-card>
      <upload-pill></upload-pill>
      <site-badge></site-badge>
      <input-bar></input-bar>`
  }
}
customElements.define('stock-terminal', StockTerminal)
</script>
</body>
</html>
